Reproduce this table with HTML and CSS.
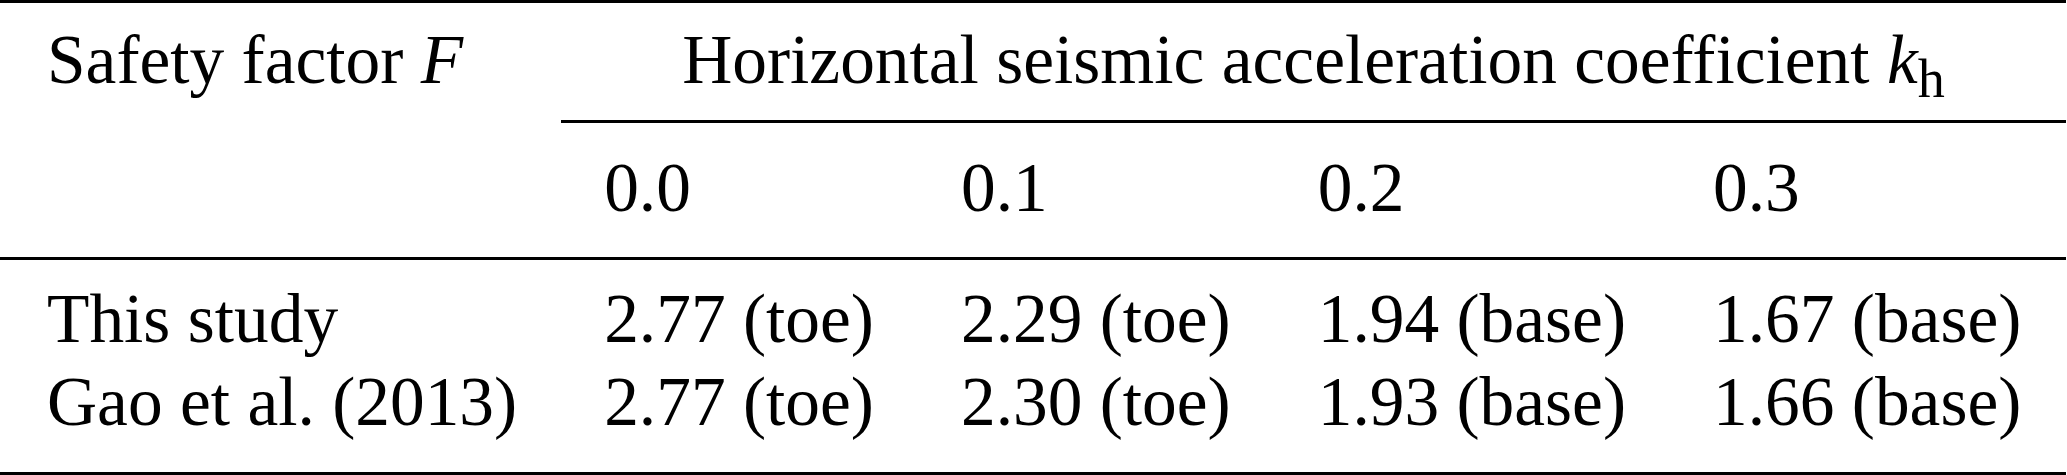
FILE: index.html
```html
<!DOCTYPE html>
<html lang="en">

<head>
  <meta charset="UTF-8">
  <meta name="viewport" content="width=device-width, initial-scale=1.0">
  <title>Safety factor table</title>
  <link rel="stylesheet" href="styles.css">
</head>

<body>
  <table class="result-table">
    <tr class="head-top">
      <th class="first">Safety factor <i>F</i></th>
      <th class="group" colspan="4">Horizontal seismic acceleration coefficient <i>k</i><span class="sub">h</span></th>
    </tr>
    <tr class="head-sub">
      <th class="first"></th>
      <th>0.0</th>
      <th>0.1</th>
      <th>0.2</th>
      <th class="last">0.3</th>
    </tr>
    <tr class="row-one">
      <td class="first">This study</td>
      <td>2.77 (toe)</td>
      <td>2.29 (toe)</td>
      <td>1.94 (base)</td>
      <td class="last">1.67 (base)</td>
    </tr>
    <tr class="row-two">
      <td class="first">Gao et al. (2013)</td>
      <td>2.77 (toe)</td>
      <td>2.30 (toe)</td>
      <td>1.93 (base)</td>
      <td class="last">1.66 (base)</td>
    </tr>
  </table>
</body>

</html>
```

FILE: styles.css
```css
* {
  margin: 0;
  padding: 0;
}

body {
  background-color: #fff;
  color: #000;
  font-family: "Liberation Serif", "Times New Roman", serif;
}

.result-table {
  border-collapse: separate;
  border-spacing: 0;
  font-size: 69.4px;
  line-height: 83.3px;
}

.result-table th,
.result-table td {
  font-weight: normal;
  text-align: left;
  vertical-align: baseline;
  white-space: nowrap;
  padding: 0 43.5px;
}

.result-table .first {
  padding-left: 47px;
}

.result-table .last {
  padding-right: 45px;
}

/* top rule */
.head-top th {
  border-top: 3px solid #000;
  padding-top: 15px;
  padding-bottom: 18.3px;
}

/* partial rule under the group heading */
.head-top .group {
  text-align: center;
  border-bottom: 3px solid #000;
}

.head-sub th {
  padding-top: 23.3px;
  padding-bottom: 27.8px;
  border-bottom: 3px solid #000;
}

.row-one td {
  padding-top: 16.6px;
}

.row-two td {
  padding-bottom: 28.8px;
  border-bottom: 3px solid #000;
}

.sub {
  font-size: 0.78em;
  line-height: 0;
  vertical-align: -0.26em;
}
```
